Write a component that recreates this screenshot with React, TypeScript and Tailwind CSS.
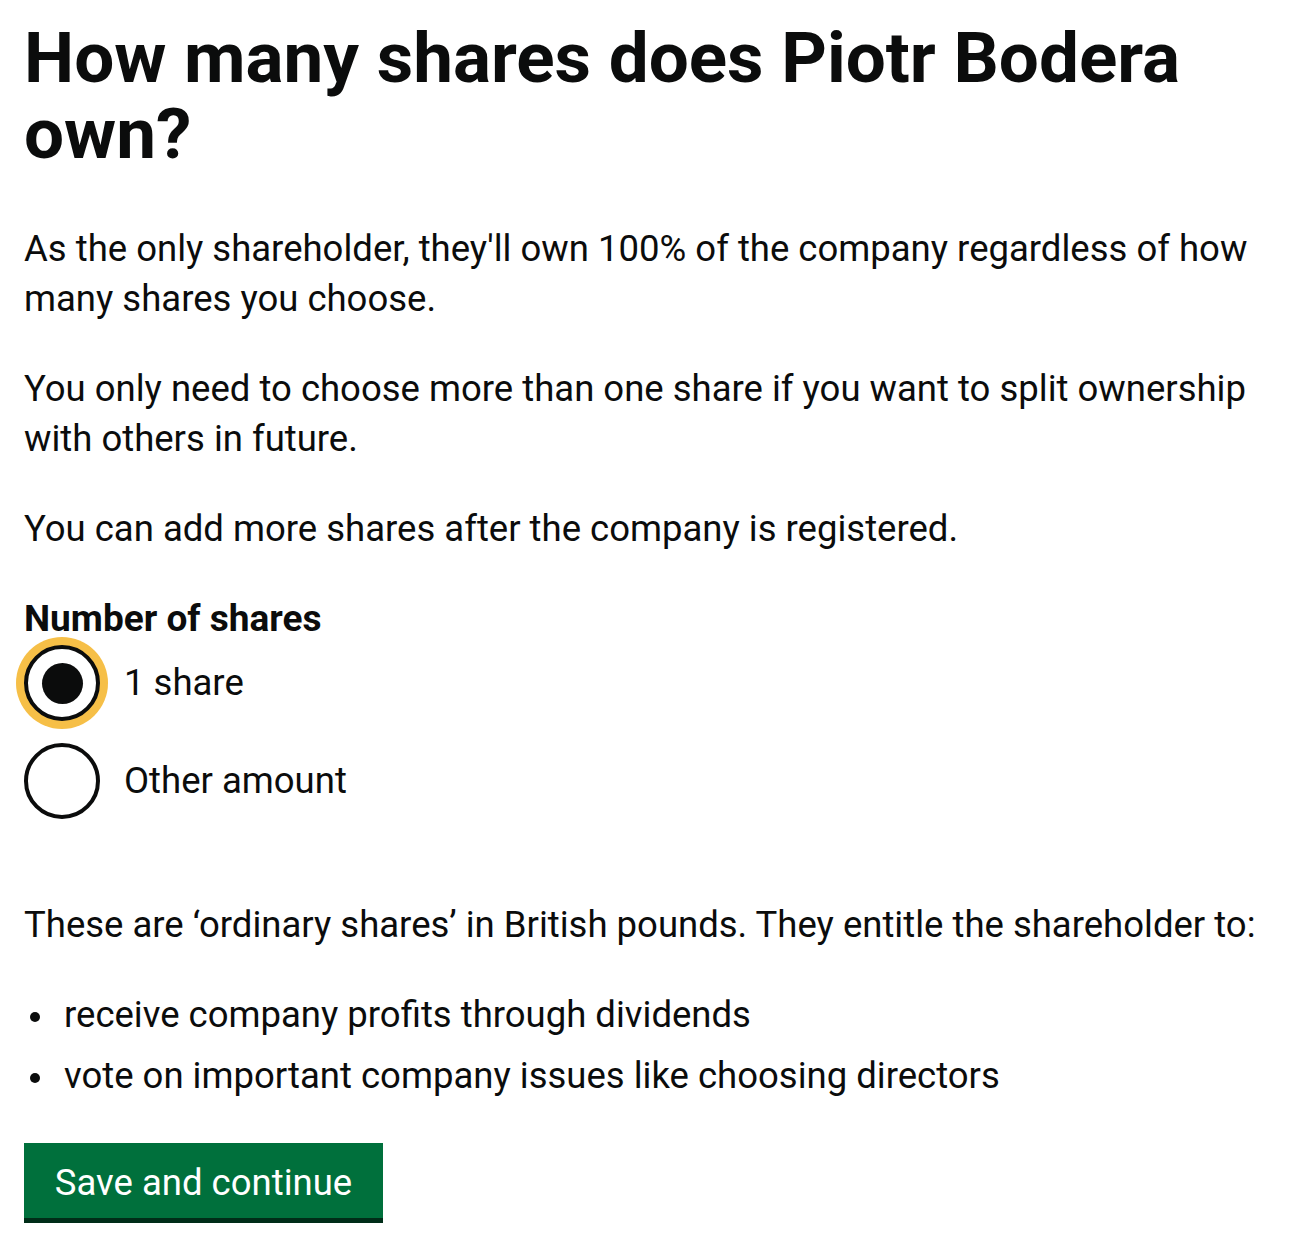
import React from "react";

function Bullet({ children }: { children: React.ReactNode }) {
  return (
    <li className="flex items-center text-[36.5px] leading-[50px]">
      <span className="flex w-[40px] items-center">
        <span className="ml-[6px] mt-[4px] h-[10px] w-[10px] rounded-full bg-[#0b0c0c]" />
      </span>
      <span>{children}</span>
    </li>
  );
}

export default function App() {
  return (
    <div
      className="min-h-[1250px] bg-white px-[24px] pt-[20px] text-[#0b0c0c]"
      style={{ fontFamily: "Roboto, 'Noto Sans', Arial, sans-serif" }}
    >
      <div className="w-[1254px]">
        <h1 className="text-[71px] font-bold leading-[76px]">
          How many shares does Piotr Bodera
          <br />
          own?
        </h1>

        <p className="mt-[52px] text-[36.5px] leading-[50px]">
          As the only shareholder, they'll own 100% of the company regardless of how
          <br />
          many shares you choose.
        </p>
        <p className="mt-[40px] text-[36.5px] leading-[50px]">
          You only need to choose more than one share if you want to split ownership
          <br />
          with others in future.
        </p>
        <p className="mt-[40px] text-[36.5px] leading-[50px]">
          You can add more shares after the company is registered.
        </p>

        <fieldset className="mt-[40px]">
          <legend className="text-[37px] font-bold leading-[50px]">Number of shares</legend>
          <div className="mt-[1px] flex flex-col gap-[22px]">
            <label className="flex items-center gap-[24px]">
              <span className="flex h-[76px] w-[76px] items-center justify-center rounded-full border-[4px] border-[#0b0c0c] bg-white shadow-[0_0_0_8px_#f6bf47]">
                <span className="h-[41px] w-[41px] rounded-full bg-[#0b0c0c]" />
              </span>
              <span className="text-[36.5px] leading-[50px]">1 share</span>
            </label>
            <label className="flex items-center gap-[24px]">
              <span className="h-[76px] w-[76px] rounded-full border-[4px] border-[#0b0c0c] bg-white" />
              <span className="text-[36.5px] leading-[50px]">Other amount</span>
            </label>
          </div>
        </fieldset>

        <p className="mt-[81px] text-[36.5px] leading-[50px]">
          These are ‘ordinary shares’ in British pounds. They entitle the shareholder to:
        </p>
        <ul className="mt-[40px] flex flex-col gap-[11px]">
          <Bullet>receive company profits through dividends</Bullet>
          <Bullet>vote on important company issues like choosing directors</Bullet>
        </ul>

        <button className="mt-[42px] h-[75px] w-[359px] bg-[#00703c] pt-[5px] text-[36.5px] leading-[50px] text-white shadow-[0_5px_0_#002d18]">
          Save and continue
        </button>
      </div>
    </div>
  );
}
